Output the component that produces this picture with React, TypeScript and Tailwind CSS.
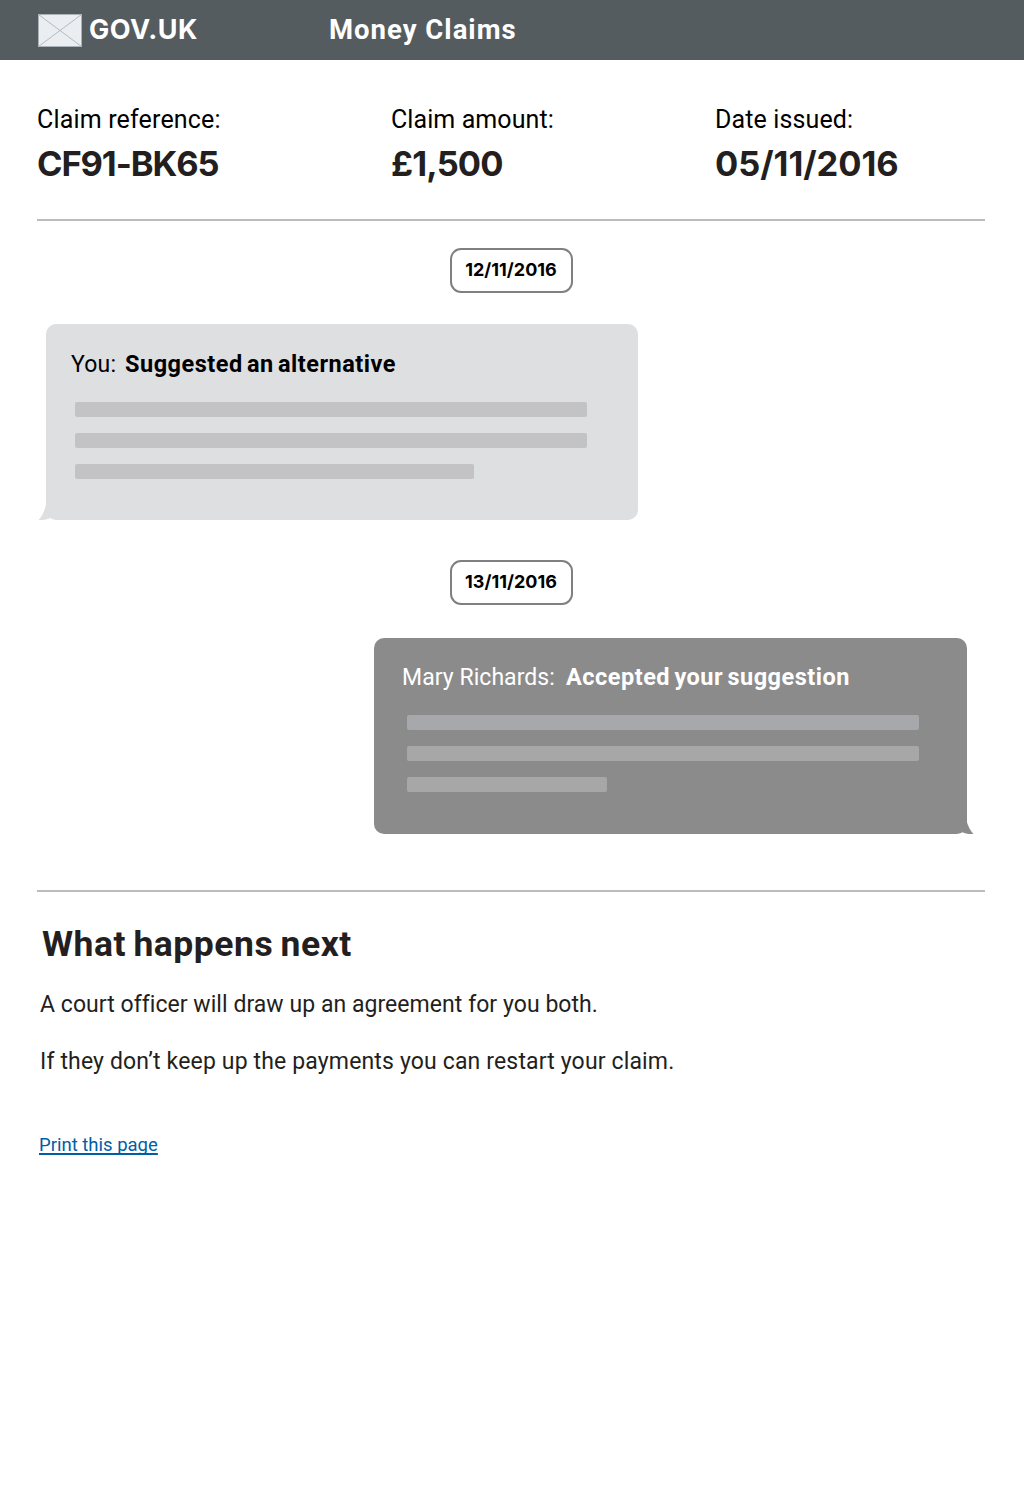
import React from "react";

const BODY = "font-['Roboto','Noto_Sans',sans-serif]";
const FIGURES = "font-['Inter','Roboto',sans-serif]";

function Fact({ label, labelClass, value, valueClass }: { label: string; labelClass: string; value: string; valueClass: string }) {
  return (
    <div className="whitespace-nowrap">
      <dt className={`text-[25px] leading-[30px] text-black ${labelClass}`}>{label}</dt>
      <dd className={`mt-[7px] text-[34.5px] leading-[44px] font-bold text-[#231f20] ${FIGURES} ${valueClass}`}>{value}</dd>
    </div>
  );
}

function DatePill({ children }: { children: string }) {
  return (
    <div className={`mx-auto flex h-[45px] w-[123px] items-center justify-center rounded-[11px] border-2 border-[#808080] pb-px text-[18px] leading-6 font-bold text-black ${FIGURES}`}>
      {children}
    </div>
  );
}

function Tail({ className }: { className: string }) {
  return (
    <svg className={`absolute bottom-0 h-4 w-4 ${className}`} viewBox="0 0 16 16" fill="currentColor">
      <path d="M8 0 C7.5 5 4 12.500 0.500 16 C5 16.400 9 15.600 12 14 L16 6 L8 0 Z" />
    </svg>
  );
}

export default function App() {
  return (
    <div className={`min-h-[1495px] w-[1024px] bg-white ${BODY}`}>
      <header className={`flex h-[60px] items-center bg-[#555c5f] pl-[38px] font-bold text-white ${FIGURES}`}>
        <svg className="mt-px h-[33px] w-[44px]" viewBox="0 0 44 33">
          <rect x="0.5" y="0.5" width="43" height="32" fill="#eaeef0" stroke="#aab3ba" />
          <path d="M0.500 0.500 L43.500 32.500 M43.500 0.500 L0.500 32.500" stroke="#b3bac2" strokeWidth="1" />
        </svg>
        <span className="ml-[7px] w-[240px] text-[27px] tracking-[0.55px]">GOV.UK</span>
        <span className="font-['Roboto',sans-serif] text-[27.5px] tracking-[1px]">Money Claims</span>
      </header>

      <main className="ml-[37px] w-[948px]">
        <dl className="grid h-[161px] grid-cols-[354px_324px_1fr] border-b-2 border-[#bcbcbc] pt-[45px]">
          <Fact label="Claim reference:" labelClass="tracking-[0.17px]" value="CF91-BK65" valueClass="tracking-[-1.1px]" />
          <Fact label="Claim amount:" labelClass="tracking-[0.08px]" value="£1,500" valueClass="tracking-[-0.85px]" />
          <Fact label="Date issued:" labelClass="tracking-[0.12px]" value="05/11/2016" valueClass="tracking-[-0.05px]" />
        </dl>

        <section className="flex h-[671px] flex-col border-b-2 border-[#bcbcbc] pt-[27px]">
          <DatePill>12/11/2016</DatePill>
          <article className="relative mt-[31px] ml-[9px] h-[196px] w-[592px] rounded-[10px] bg-[#dedfe1] pt-[26px] text-[#dedfe1]">
            <Tail className="-left-2" />
            <h2 className="flex h-[28px] items-baseline pl-[25px] text-[23px] leading-[28px] whitespace-nowrap text-black">
              <span className="w-[54px] font-normal tracking-[0.2px]">You:</span>
              <span className="text-[23.5px] font-bold tracking-[0.5px] [word-spacing:-2px]">Suggested an alternative</span>
            </h2>
            <div className="mt-6 ml-[29px] flex flex-col gap-4">
              <div className="h-[15px] w-[512px] rounded-xs bg-[#c3c3c5]" />
              <div className="h-[15px] w-[512px] rounded-xs bg-[#c3c3c5]" />
              <div className="h-[15px] w-[399px] rounded-xs bg-[#c3c3c5]" />
            </div>
          </article>

          <div className="mt-[40px]"><DatePill>13/11/2016</DatePill></div>
          <article className="relative mt-[33px] ml-[337px] h-[196px] w-[593px] rounded-[10px] bg-[#8b8b8b] pt-[25px] text-[#8b8b8b]">
            <Tail className="-right-[7px] -scale-x-100" />
            <h2 className="flex h-[28px] items-baseline pl-[28px] text-[23px] leading-[28px] whitespace-nowrap text-white">
              <span className="w-[164px] font-normal tracking-[0.05px]">Mary Richards:</span>
              <span className="text-[23.5px] font-bold tracking-[0.5px] [word-spacing:-2px]">Accepted your suggestion</span>
            </h2>
            <div className="mt-6 ml-[33px] flex flex-col gap-4">
              <div className="h-[15px] w-[512px] rounded-xs bg-[#a6a8ab]" />
              <div className="h-[15px] w-[512px] rounded-xs bg-[#a7a7a7]" />
              <div className="h-[15px] w-[200px] rounded-xs bg-[#a7a7a7]" />
            </div>
          </article>
        </section>

        <section className="pt-[32px] pl-[3px] text-[#231f20]">
          <h1 className="pl-[2px] text-[35.5px] leading-[40px] font-bold tracking-[0.53px] [word-spacing:-2px]">What happens next</h1>
          <p className="mt-[27px] text-[23px] leading-[28px] tracking-[0.05px]">A court officer will draw up an agreement for you both.</p>
          <p className="mt-[29px] text-[23px] leading-[28px] tracking-[0.15px]">If they don’t keep up the payments you can restart your claim.</p>
          <a href="#" className="mt-[57px] -ml-px block w-[119px] text-[18.5px] leading-[24px] whitespace-nowrap text-[#005ea5] underline decoration-2 underline-offset-[2px] [text-decoration-skip-ink:none]">Print this page</a>
        </section>
      </main>
    </div>
  );
}
